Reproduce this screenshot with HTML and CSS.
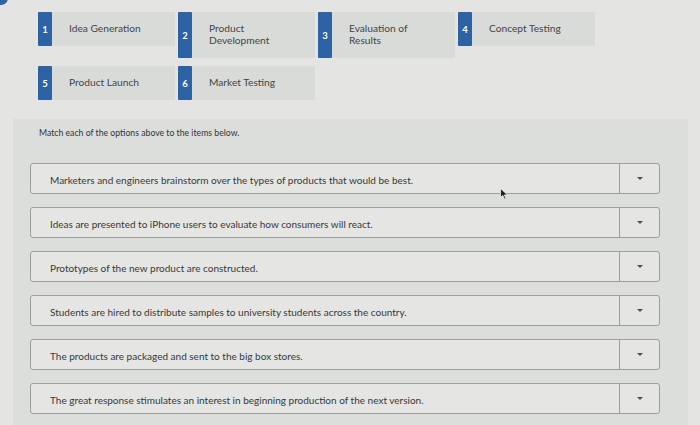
FILE: index.html
```html
<!DOCTYPE html>
<html>
<head>
<meta charset="utf-8">
<link rel="stylesheet" href="styles.css">
</head>
<body>
<div class="page">
  <span class="corner-dot"></span>
  <div class="options">
    <div class="card"><span class="badge">1</span><span class="label">Idea Generation</span></div>
    <div class="card"><span class="badge">2</span><span class="label">Product<br>Development</span></div>
    <div class="card"><span class="badge">3</span><span class="label">Evaluation of<br>Results</span></div>
    <div class="card"><span class="badge">4</span><span class="label">Concept Testing</span></div>
    <div class="card"><span class="badge">5</span><span class="label">Product Launch</span></div>
    <div class="card"><span class="badge">6</span><span class="label">Market Testing</span></div>
  </div>

  <div class="panel">
    <p class="prompt">Match each of the options above to the items below.</p>
    <div class="rows">
      <div class="row"><span class="item">Marketers and engineers brainstorm over the types of products that would be best.</span><span class="drop"><span class="tri"></span></span>
        <svg class="cursor" width="9" height="12" viewBox="0 0 9 12"><path d="M0.5 0.5 L0.5 9.5 L2.8 7.4 L4.6 11.2 L6 10.5 L4.3 6.9 L7.6 6.9 Z" fill="#222" stroke="#eee" stroke-width="0.8"/></svg>
      </div>
      <div class="row"><span class="item">Ideas are presented to iPhone users to evaluate how consumers will react.</span><span class="drop"><span class="tri"></span></span></div>
      <div class="row"><span class="item">Prototypes of the new product are constructed.</span><span class="drop"><span class="tri"></span></span></div>
      <div class="row"><span class="item">Students are hired to distribute samples to university students across the country.</span><span class="drop"><span class="tri"></span></span></div>
      <div class="row"><span class="item">The products are packaged and sent to the big box stores.</span><span class="drop"><span class="tri"></span></span></div>
      <div class="row"><span class="item">The great response stimulates an interest in beginning production of the next version.</span><span class="drop"><span class="tri"></span></span></div>
    </div>
  </div>
</div>
</body>
</html>
```

FILE: styles.css
```css
* { box-sizing: border-box; }
html, body {
  margin: 0;
  padding: 0;
  background: #e4e5e2;
  font-family: "Lato", "Open Sans", "Liberation Sans", sans-serif;
  color: #3b3d3d;
}
.page {
  position: relative;
  width: 700px;
  height: 425px;
  overflow: hidden;
  padding-top: 12px;
}
.corner-dot {
  position: absolute;
  left: -6px;
  top: -9px;
  width: 14px;
  height: 14px;
  border-radius: 50%;
  background: #2e63a6;
}
.options {
  display: grid;
  grid-template-columns: repeat(4, 137px);
  column-gap: 3px;
  row-gap: 8px;
  margin-left: 38px;
  align-items: start;
}
.card {
  display: flex;
  align-items: stretch;
}
.badge {
  flex: 0 0 14px;
  background: #2d62a5;
  color: #fff;
  font-weight: 700;
  font-size: 9.5px;
  display: flex;
  align-items: center;
  justify-content: center;
  border-radius: 1px;
}
.label {
  flex: 1;
  background: #d9dbd8;
  font-size: 10.2px;
  line-height: 12px;
  padding: 10px 8px 12px 17px;
  color: #434545;
}
.panel {
  margin: 19px 12px 0 13px;
  background: #dcdedb;
  padding: 1px 0 20px 17px;
  height: 320px;
}
.prompt {
  margin: 8px 0 0 9px;
  font-size: 8.7px;
  line-height: 10px;
  color: #333;
}
.rows {
  display: flex;
  flex-direction: column;
  gap: 13px;
  margin-top: 25px;
  width: 630px;
}
.row {
  position: relative;
  display: flex;
  align-items: stretch;
  height: 31px;
  background: #e5e6e3;
  border: 1px solid #9c9e9c;
  border-radius: 3px;
}
.item {
  flex: 1;
  display: flex;
  align-items: center;
  padding-left: 19px;
  padding-top: 2px;
  font-size: 10px;
  color: #363838;
}
.drop {
  flex: 0 0 40px;
  border-left: 1px solid #9c9e9c;
  display: flex;
  align-items: center;
  justify-content: center;
}
.tri {
  width: 0;
  height: 0;
  border-left: 3.5px solid transparent;
  border-right: 3.5px solid transparent;
  border-top: 3.5px solid #4c4f52;
}
.cursor {
  position: absolute;
  left: 469px;
  top: 24px;
}
```
